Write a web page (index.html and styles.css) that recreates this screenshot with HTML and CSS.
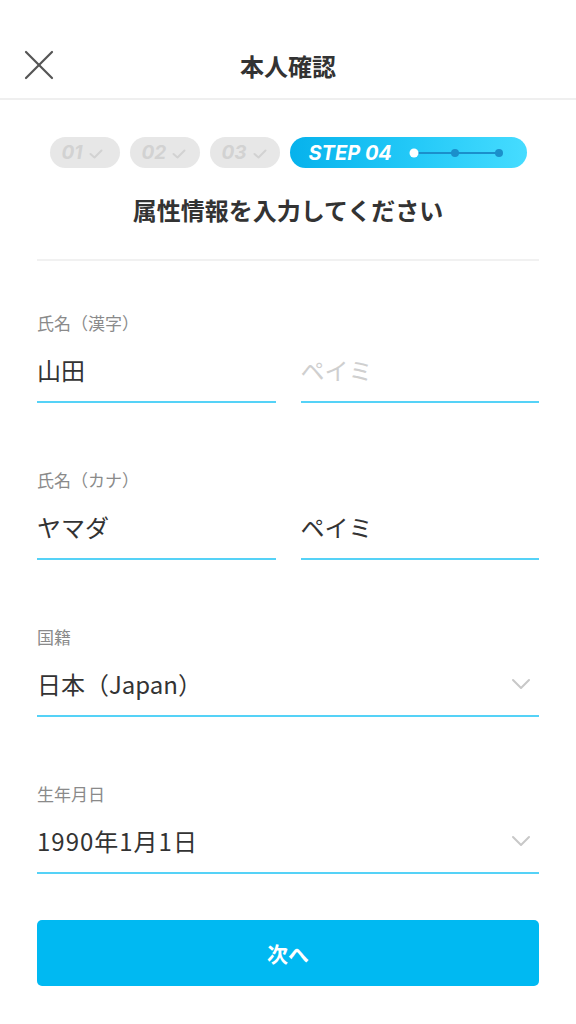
FILE: index.html
```html
<!DOCTYPE html>
<html lang="ja">
<head>
    <meta charset="UTF-8">
    <meta name="viewport" content="width=device-width, initial-scale=1.0">
    <title>本人確認</title>
    <link rel="stylesheet" href="styles.css">
</head>
<body>
    <header class="header">
        <button class="close-btn" aria-label="閉じる">
            <svg width="30" height="30" viewBox="0 0 30 30" fill="none" stroke="#555" stroke-width="2.2" stroke-linecap="round">
                <line x1="2" y1="2" x2="28" y2="28"></line>
                <line x1="28" y1="2" x2="2" y2="28"></line>
            </svg>
        </button>
        <h1 class="header-title">本人確認</h1>
        <div class="header-side"></div>
    </header>

    <div class="steps">
        <div class="step done">
            <span class="step-num">01</span>
            <svg class="step-check" width="14" height="10" viewBox="0 0 14 10" fill="none" stroke="currentColor" stroke-width="2" stroke-linecap="round" stroke-linejoin="round">
                <polyline points="1.5 5 5.5 8.5 12.5 1.5"></polyline>
            </svg>
        </div>
        <div class="step done">
            <span class="step-num">02</span>
            <svg class="step-check" width="14" height="10" viewBox="0 0 14 10" fill="none" stroke="currentColor" stroke-width="2" stroke-linecap="round" stroke-linejoin="round">
                <polyline points="1.5 5 5.5 8.5 12.5 1.5"></polyline>
            </svg>
        </div>
        <div class="step done">
            <span class="step-num">03</span>
            <svg class="step-check" width="14" height="10" viewBox="0 0 14 10" fill="none" stroke="currentColor" stroke-width="2" stroke-linecap="round" stroke-linejoin="round">
                <polyline points="1.5 5 5.5 8.5 12.5 1.5"></polyline>
            </svg>
        </div>
        <div class="step current">
            <span class="step-label">STEP 04</span>
            <svg class="step-track" width="96" height="12" viewBox="0 0 96 12">
                <line x1="6" y1="6" x2="91" y2="6" stroke="#1b8fcb" stroke-width="2"></line>
                <circle cx="47" cy="6" r="4" fill="#1b8fcb"></circle>
                <circle cx="91" cy="6" r="4" fill="#1b8fcb"></circle>
                <circle cx="6" cy="6" r="4.5" fill="#fff"></circle>
            </svg>
        </div>
    </div>

    <h2 class="lead">属性情報を入力してください</h2>

    <form class="form">
        <div class="field-group">
            <div class="field-label">氏名（漢字）</div>
            <div class="field-row">
                <div class="field">山田</div>
                <div class="field placeholder">ペイミ</div>
            </div>
        </div>

        <div class="field-group">
            <div class="field-label">氏名（カナ）</div>
            <div class="field-row">
                <div class="field">ヤマダ</div>
                <div class="field">ペイミ</div>
            </div>
        </div>

        <div class="field-group">
            <div class="field-label">国籍</div>
            <div class="field select">
                <span>日本（Japan）</span>
                <svg class="chevron" width="20" height="12" viewBox="0 0 20 12" fill="none" stroke="#c8c8c8" stroke-width="2" stroke-linecap="round" stroke-linejoin="round">
                    <polyline points="2 2 10 10 18 2"></polyline>
                </svg>
            </div>
        </div>

        <div class="field-group">
            <div class="field-label">生年月日</div>
            <div class="field select">
                <span class="date">1990年1月1日</span>
                <svg class="chevron" width="20" height="12" viewBox="0 0 20 12" fill="none" stroke="#c8c8c8" stroke-width="2" stroke-linecap="round" stroke-linejoin="round">
                    <polyline points="2 2 10 10 18 2"></polyline>
                </svg>
            </div>
        </div>

        <button type="button" class="next-btn">次へ</button>
    </form>
</body>
</html>
```

FILE: styles.css
```css
* {
    margin: 0;
    padding: 0;
    box-sizing: border-box;
}

body {
    font-family: "Noto Sans CJK JP", "Noto Sans", sans-serif;
    background-color: #fff;
    color: #333;
}

.header {
    display: flex;
    align-items: center;
    height: 100px;
    padding-top: 32px;
    border-bottom: 2px solid #efefef;
}

.header-side,
.close-btn {
    width: 80px;
    height: 40px;
}

.close-btn {
    display: flex;
    align-items: center;
    padding-left: 24px;
    background: none;
    border: none;
}

.header-title {
    flex: 1;
    text-align: center;
    font-size: 24px;
    font-weight: 700;
    color: #333;
}

.steps {
    display: flex;
    justify-content: center;
    gap: 10px;
    margin-top: 37px;
}

.step {
    display: flex;
    align-items: center;
    height: 31px;
    border-radius: 16px;
    font-family: Inter, Roboto, sans-serif;
    font-style: italic;
    font-weight: 700;
    font-size: 19px;
}

.step.done {
    width: 70px;
    padding-left: 12px;
    gap: 6px;
    background-color: #e7e7e7;
    color: #d2d2d2;
}

.step-check {
    margin-top: 2px;
}

.step.current {
    width: 237px;
    padding-left: 19px;
    gap: 16px;
    color: #fff;
    font-size: 20px;
    background: linear-gradient(90deg, #06b2ec 0%, #22c8f7 50%, #46dcff 100%);
}

.lead {
    margin-top: 27px;
    text-align: center;
    font-size: 24px;
    font-weight: 700;
    line-height: 30px;
    color: #333;
}

.form {
    margin: 34px 37px 0;
    border-top: 2px solid #f1f1f1;
    padding-top: 51px;
}

.field-group {
    margin-bottom: 66px;
}

.field-label {
    font-size: 17px;
    line-height: 22px;
    color: #8a8a8a;
}

.field-row {
    display: flex;
    gap: 25px;
}

.field {
    flex: 1;
    margin-top: 21px;
    padding-bottom: 16px;
    font-size: 24px;
    line-height: 30px;
    color: #333;
    border-bottom: 2px solid #55d2f7;
}

.field.placeholder {
    color: #cfcfcf;
}

.field.select {
    display: flex;
    align-items: center;
    justify-content: space-between;
    padding-right: 8px;
}

.date {
    letter-spacing: 1px;
}

.next-btn {
    display: block;
    width: 100%;
    height: 66px;
    margin-top: -20px;
    border: none;
    border-radius: 5px;
    background-color: #00b9f2;
    color: #fff;
    font-family: inherit;
    font-size: 21px;
    font-weight: 700;
}
```
